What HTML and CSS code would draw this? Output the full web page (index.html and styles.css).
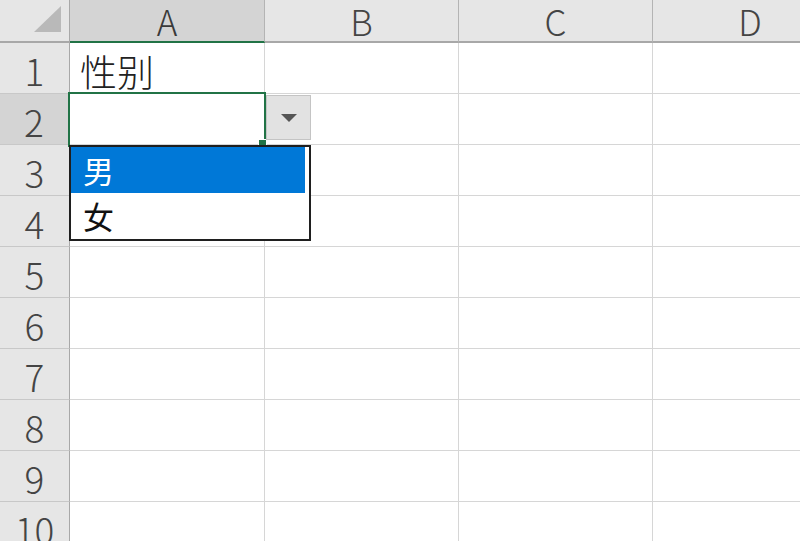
FILE: index.html
```html
<!DOCTYPE html>
<html lang="zh">
<head>
    <meta charset="UTF-8">
    <meta name="viewport" content="width=device-width, initial-scale=1.0">
    <title>性别 下拉列表</title>
    <link rel="stylesheet" href="styles.css">
</head>
<body>
    <!-- Worksheet grid -->
    <div class="sheet">
        <div class="corner"><span class="corner-mark"></span></div>
        <div class="col-head active">A</div>
        <div class="col-head">B</div>
        <div class="col-head">C</div>
        <div class="col-head last">D</div>

        <div class="row-head">1</div>
        <div class="cell text">性别</div><div class="cell"></div><div class="cell"></div><div class="cell last"></div>

        <div class="row-head active">2</div>
        <div class="cell"></div><div class="cell"></div><div class="cell"></div><div class="cell last"></div>

        <div class="row-head">3</div>
        <div class="cell"></div><div class="cell"></div><div class="cell"></div><div class="cell last"></div>

        <div class="row-head">4</div>
        <div class="cell"></div><div class="cell"></div><div class="cell"></div><div class="cell last"></div>

        <div class="row-head">5</div>
        <div class="cell"></div><div class="cell"></div><div class="cell"></div><div class="cell last"></div>

        <div class="row-head">6</div>
        <div class="cell"></div><div class="cell"></div><div class="cell"></div><div class="cell last"></div>

        <div class="row-head">7</div>
        <div class="cell"></div><div class="cell"></div><div class="cell"></div><div class="cell last"></div>

        <div class="row-head">8</div>
        <div class="cell"></div><div class="cell"></div><div class="cell"></div><div class="cell last"></div>

        <div class="row-head">9</div>
        <div class="cell"></div><div class="cell"></div><div class="cell"></div><div class="cell last"></div>

        <div class="row-head">10</div>
        <div class="cell"></div><div class="cell"></div><div class="cell"></div><div class="cell last"></div>

        <!-- Selection and validation dropdown -->
        <div class="selection"></div>
        <div class="fill-handle"></div>
        <div class="drop-btn"><span class="arrow"></span></div>
        <ul class="drop-list">
            <li class="selected">男</li>
            <li>女</li>
        </ul>
    </div>
</body>
</html>
```

FILE: styles.css
```css
body {
    margin: 0;
    padding: 0;
    background: #ffffff;
    font-family: "Noto Sans CJK SC", "Noto Sans", sans-serif;
    overflow: hidden;
}

.sheet {
    position: relative;
    display: grid;
    grid-template-columns: 70px 195px 194px 194px 194px;
    grid-template-rows: 43px repeat(10, 51px);
    width: 800px;
    height: 541px;
    overflow: hidden;
}

.corner {
    background: #e6e6e6;
    border-right: 1px solid #a8a8a8;
    border-bottom: 2px solid #a8a8a8;
    display: flex;
    justify-content: flex-end;
    align-items: flex-end;
    padding: 0 8px 9px 0;
}

.corner-mark {
    width: 0;
    height: 0;
    border-left: 27px solid transparent;
    border-bottom: 26px solid #b9b9b9;
}

.col-head {
    background: #e6e6e6;
    border-right: 1px solid #b4b4b4;
    border-bottom: 2px solid #a8a8a8;
    color: #444444;
    font-size: 35px;
    font-weight: 300;
    line-height: 41px;
    text-align: center;
}

.col-head.active {
    background: #d4d4d4;
    border-bottom-color: #217346;
    color: #3a3a3a;
}

.col-head.last {
    border-right: none;
}

.row-head {
    background: #e6e6e6;
    border-right: 1px solid #a8a8a8;
    border-bottom: 1px solid #c8c8c8;
    color: #444444;
    font-size: 37px;
    font-weight: 300;
    line-height: 48px;
    text-align: center;
    padding-top: 3px;
    box-sizing: border-box;
}

.row-head.active {
    background: #d4d4d4;
    border-right: 2px solid #217346;
}

.cell {
    border-right: 1px solid #d6d6d6;
    border-bottom: 1px solid #d6d6d6;
}

.cell.last {
    border-right: none;
}

.cell.text {
    font-size: 37px;
    font-weight: 300;
    line-height: 48px;
    padding: 4px 0 0 10px;
    box-sizing: border-box;
    color: #222222;
}

.selection {
    position: absolute;
    left: 68px;
    top: 92px;
    width: 198px;
    height: 55px;
    border: 2px solid #217346;
    box-sizing: border-box;
}

.fill-handle {
    position: absolute;
    left: 258px;
    top: 139px;
    width: 9px;
    height: 9px;
    background: #217346;
    border: 1px solid #ffffff;
    box-sizing: border-box;
}

.drop-btn {
    position: absolute;
    left: 266px;
    top: 95px;
    width: 45px;
    height: 45px;
    background: #e2e2e2;
    border: 1px solid #c4c4c4;
    box-sizing: border-box;
    display: flex;
    justify-content: center;
    align-items: center;
}

.arrow {
    width: 0;
    height: 0;
    border-left: 8px solid transparent;
    border-right: 8px solid transparent;
    border-top: 8px solid #555555;
}

.drop-list {
    position: absolute;
    left: 69px;
    top: 145px;
    width: 242px;
    height: 96px;
    margin: 0;
    padding: 0;
    list-style: none;
    background: #ffffff;
    border: 2px solid #1f1f1f;
    box-sizing: border-box;
}

.drop-list li {
    height: 46px;
    line-height: 46px;
    font-size: 31px;
    padding-left: 12px;
    color: #111111;
}

.drop-list li.selected {
    background: #0078d7;
    color: #ffffff;
    margin-right: 4px;
}
```
